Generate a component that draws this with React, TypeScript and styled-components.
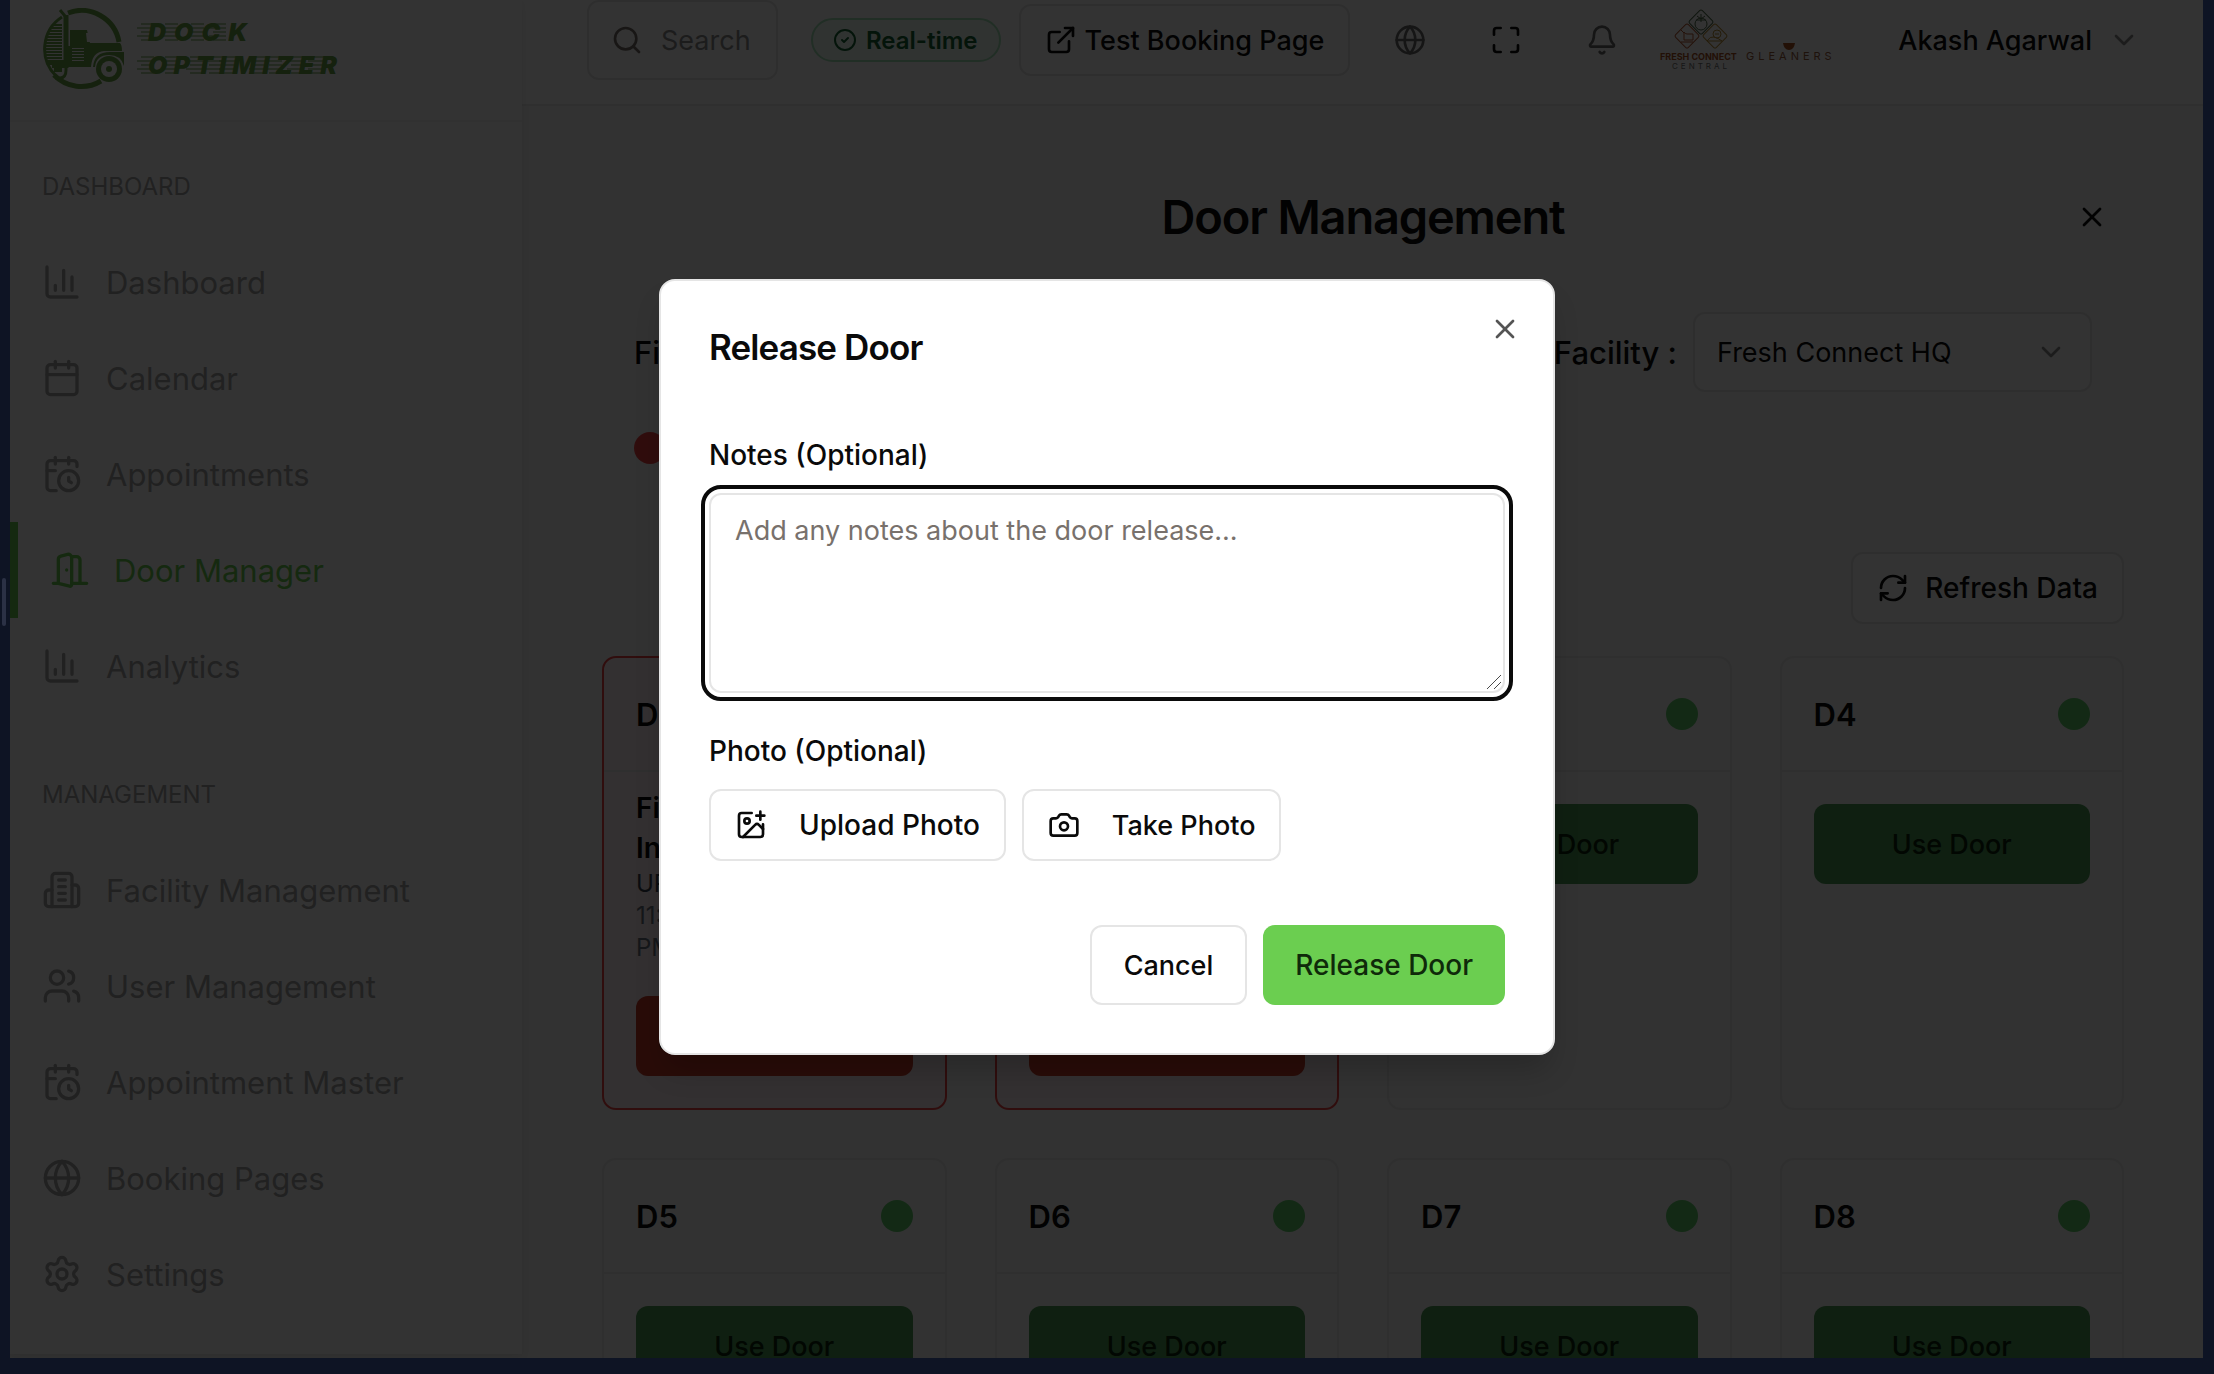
import React from "react";
import styled, { createGlobalStyle } from "styled-components";
import {
  Bell,
  Calendar,
  CalendarClock,
  Camera,
  ChevronDown,
  CircleCheck,
  ExternalLink,
  Globe,
  ImagePlus,
  LogOut,
  Maximize,
  RefreshCw,
  Search,
  Settings,
  Users,
  X,
} from "lucide-react";

const color = {
  frame: "#0e1424",
  ink: "#0a0a0a",
  muted: "#78716c",
  nav: "#a6a6a6",
  line: "#e5e5e5",
  page: "#f7f7f7",
  brand: "#6bce50",
  logo: "#6ba549",
  free: "#5fcd6a",
  use: "#4b9b55",
  busy: "#ef4444",
  release: "#cc3c2c",
};

const GlobalStyle = createGlobalStyle`
  *, *::before, *::after { box-sizing: border-box; }
  body {
    margin: 0;
    font-family: Inter, "Liberation Sans", sans-serif;
    font-size: 27px;
    color: ${color.ink};
  }
  button, input, select, textarea { font: inherit; color: inherit; margin: 0; }
  h1, h2, h3, p, ul { margin: 0; padding: 0; }
  svg { flex: none; display: block; }
`;

const Frame = styled.div`
  position: relative;
  height: 100vh;
  padding: 0 11px 16px 10px;
  background: ${color.frame};
`;

const DragHandle = styled.span`
  position: absolute;
  left: 2px;
  top: 578px;
  width: 4px;
  height: 48px;
  border-radius: 2px;
  background: #2b3145;
`;

const Screen = styled.div`
  position: relative;
  display: flex;
  height: 100%;
  overflow: hidden;
  background: ${color.page};
`;

/* ---------- sidebar ---------- */

const Sidebar = styled.aside`
  flex: none;
  width: 512px;
  margin-bottom: 4px;
  background: #fff;
  box-shadow: 0 2px 8px rgba(0, 0, 0, 0.08);
  z-index: 1;
`;

const Brand = styled.div`
  height: 122px;
  padding: 8px 32px 0;
  border-bottom: 2px solid #f3f3f3;
`;

const NavGroup = styled.nav<{ $first?: boolean }>`
  padding-top: ${(p) => (p.$first ? 45 : 61)}px;
`;

const NavHeading = styled.h3`
  padding: 0 32px;
  margin-bottom: 27px;
  font-size: 24px;
  line-height: 40px;
  font-weight: 400;
  text-transform: uppercase;
  color: ${color.nav};
`;

const NavLink = styled.a<{ $active?: boolean }>`
  display: flex;
  align-items: center;
  gap: 24px;
  height: 96px;
  padding: 0 32px;
  font-size: 31px;
  text-decoration: none;
  color: ${(p) => (p.$active ? color.brand : color.nav)};
  border-left: ${(p) => (p.$active ? `8px solid ${color.brand}` : "0")};
`;

/* ---------- top bar ---------- */

const Main = styled.main`
  flex: 1;
  min-width: 0;
  overflow: hidden;
`;

const TopBar = styled.header`
  display: flex;
  align-items: center;
  height: 106px;
  padding: 0 63px 24px 65px;
  background: #fff;
  border-bottom: 2px solid #ebebeb;
`;

const SearchBox = styled.label`
  display: flex;
  align-items: center;
  gap: 18px;
  width: 191px;
  height: 80px;
  margin-right: 33px;
  padding: 0 22px;
  border: 2px solid ${color.line};
  border-radius: 12px;
  color: ${color.muted};
`;

const SearchInput = styled.input`
  width: 100%;
  min-width: 0;
  padding: 0;
  border: 0;
  outline: 0;
  background: none;
  &::placeholder {
    color: #8e8e8e;
    opacity: 1;
  }
`;

const StatusPill = styled.span`
  display: flex;
  align-items: center;
  gap: 9px;
  height: 44px;
  margin-right: 18px;
  padding: 0 21px 0 20px;
  border: 2px solid #a4e3b9;
  border-radius: 22px;
  background: #f0fdf4;
  color: #166534;
  font-size: 24px;
  font-weight: 600;
`;

const OutlineButton = styled.button<{ $gap?: number; $tall?: boolean; $size?: number }>`
  display: inline-flex;
  align-items: center;
  justify-content: center;
  gap: ${(p) => p.$gap ?? 8}px;
  height: ${(p) => (p.$tall ? 80 : 72)}px;
  padding: 0 ${(p) => (p.$tall ? 32 : 24)}px;
  border: 2px solid ${color.line};
  border-radius: 12px;
  background: #fff;
  font-size: ${(p) => p.$size ?? 28}px;
  font-weight: 500;
  white-space: nowrap;
`;

const IconRow = styled.div`
  display: flex;
  align-items: center;
  gap: 64px;
  margin: 0 40px 0 44px;
`;

const IconButton = styled.button<{ $tone?: string }>`
  padding: 0;
  border: 0;
  background: none;
  color: ${(p) => p.$tone ?? "#6b6b6b"};
`;

const UserButton = styled.button`
  display: flex;
  align-items: center;
  gap: 16px;
  margin-left: auto;
  padding: 0;
  border: 0;
  background: none;
  font-weight: 500;
  white-space: nowrap;
`;

/* ---------- door board ---------- */

const Board = styled.section`
  padding: 79px 79px 0 80px;
`;

const TitleRow = styled.div`
  display: grid;
  grid-template-columns: 1fr auto 1fr;
  align-items: center;
  height: 64px;
  padding: 0 16px;
  ${IconButton} {
    justify-self: end;
  }
`;

const BoardTitle = styled.h1`
  grid-column: 2;
  font-size: 47px;
  line-height: 64px;
  font-weight: 600;
  letter-spacing: -0.025em;
`;

const FilterRow = styled.div`
  display: flex;
  align-items: center;
  justify-content: space-between;
  margin-top: 63px;
  padding: 0 32px;
  font-size: 31px;
  font-weight: 500;
`;

const Field = styled.label`
  display: flex;
  align-items: center;
  gap: 16px;
`;

const SelectWrap = styled.span`
  display: grid;
  width: 399px;
  align-items: center;
  > * {
    grid-area: 1 / 1;
  }
  > svg {
    justify-self: end;
    margin-right: 25px;
    color: #8a8a8a;
    pointer-events: none;
  }
`;

const Select = styled.select`
  width: 100%;
  height: 80px;
  padding: 0 22px;
  border: 2px solid ${color.line};
  border-radius: 12px;
  appearance: none;
  background: #fff;
  font-size: 27px;
  font-weight: 400;
`;

const Legend = styled.div`
  display: flex;
  align-items: center;
  gap: 16px;
  height: 32px;
  margin-top: 40px;
  padding: 0 32px;
`;

const Dot = styled.span<{ $busy?: boolean }>`
  width: 32px;
  height: 32px;
  border-radius: 50%;
  background: ${(p) => (p.$busy ? color.busy : color.free)};
`;

const Actions = styled.div`
  display: flex;
  justify-content: flex-end;
  margin: 88px 0 32px;
`;

const DoorGrid = styled.div`
  display: grid;
  grid-template-columns: repeat(4, 1fr);
  gap: 48px;
`;

const DoorCard = styled.article<{ $busy?: boolean }>`
  border: 2px solid ${(p) => (p.$busy ? color.busy : "#eaeaea")};
  border-radius: 14px;
  background: ${(p) => (p.$busy ? "#fff1f2" : "transparent")};
`;

const DoorHeader = styled.div`
  display: flex;
  align-items: center;
  justify-content: space-between;
  height: 114px;
  padding: 0 32px;
  border-bottom: 2px solid #eaeaea;
`;

const DoorName = styled.h2`
  font-size: 31px;
  font-weight: 600;
`;

const DoorBody = styled.div<{ $busy?: boolean }>`
  padding: ${(p) => (p.$busy ? 16 : 32)}px 32px 32px;
`;

const DoorButton = styled.button<{ $busy?: boolean }>`
  display: flex;
  align-items: center;
  justify-content: center;
  gap: 32px;
  width: 100%;
  height: 80px;
  border: 0;
  border-radius: 12px;
  background: ${(p) => (p.$busy ? color.release : color.use)};
  font-weight: 500;
  color: ${(p) => (p.$busy ? color.ink : "#0a230a")};
  white-space: nowrap;
`;

const Visit = styled.div`
  margin-bottom: 32px;
  font-size: 24px;
  line-height: 32px;
  color: #6b7280;
`;

const Company = styled.p`
  font-size: 28px;
  line-height: 40px;
  font-weight: 600;
  color: ${color.ink};
`;

const Carrier = styled.p`
  color: #374151;
`;

/* ---------- dialog ---------- */

const Overlay = styled.div`
  position: absolute;
  inset: 0;
  z-index: 2;
  background: rgba(0, 0, 0, 0.8);
`;

const DialogLayer = styled.div`
  position: absolute;
  inset: 0;
  z-index: 3;
  display: grid;
  place-items: center;
  padding-bottom: 40px;
`;

const Dialog = styled.form`
  position: relative;
  width: 896px;
  padding: 48px;
  border: 2px solid ${color.line};
  border-radius: 16px;
  background: #fff;
  box-shadow: 0 20px 30px -6px rgba(0, 0, 0, 0.2);
`;

const DialogTitle = styled.h2`
  margin-bottom: 76px;
  font-size: 35px;
  line-height: 36px;
  font-weight: 600;
  letter-spacing: -0.025em;
`;

const CloseButton = styled(IconButton)`
  position: absolute;
  top: 32px;
  right: 32px;
`;

const Label = styled.label`
  display: block;
  margin-bottom: 24px;
  font-size: 28px;
  line-height: 28px;
  font-weight: 500;
`;

const NotesField = styled.div`
  display: grid;
  margin-bottom: 44px;
  > * {
    grid-area: 1 / 1;
  }
  > svg {
    place-self: end;
    margin: 3px;
    pointer-events: none;
  }
`;

const Notes = styled.textarea`
  display: block;
  width: 100%;
  height: 200px;
  padding: 16px 24px;
  border: 2px solid ${color.line};
  border-radius: 12px;
  outline: 4px solid ${color.ink};
  outline-offset: 4px;
  line-height: 40px;
  resize: vertical;
  &::-webkit-resizer {
    background: transparent;
  }
  &::placeholder {
    color: ${color.muted};
    opacity: 1;
  }
`;

const ButtonRow = styled.div<{ $end?: boolean }>`
  display: flex;
  gap: 16px;
  justify-content: ${(p) => (p.$end ? "flex-end" : "flex-start")};
  margin-top: ${(p) => (p.$end ? 64 : 0)}px;
`;

const PrimaryButton = styled.button`
  height: 80px;
  padding: 0 32px;
  border: 0;
  border-radius: 12px;
  background: ${color.brand};
  color: #0f2a0a;
  font-size: 28px;
  font-weight: 500;
`;

/* ---------- drawings ---------- */

const ChartIcon = () => (
  <svg width="40" height="40" viewBox="0 0 24 24" fill="none" stroke="currentColor" strokeWidth="2" strokeLinecap="round" strokeLinejoin="round">
    <path d="M3 3v16a2 2 0 0 0 2 2h16" />
    <path d="M8 17v-3M13 17V5M18 17V9" />
  </svg>
);

const DoorIcon = () => (
  <svg width="40" height="40" viewBox="0 0 24 24" fill="none" stroke="currentColor" strokeWidth="2" strokeLinecap="round" strokeLinejoin="round">
    <path d="M2 20h3M13 20h9M10 12v.01" />
    <path d="M13 4h3a2 2 0 0 1 2 2v14" />
    <path d="M13 4.562v16.157a1 1 0 0 1-1.242.97L5 20V5.562a2 2 0 0 1 1.515-1.94l4-1A2 2 0 0 1 13 4.561Z" />
  </svg>
);

const BuildingIcon = () => (
  <svg width="40" height="40" viewBox="0 0 24 24" fill="none" stroke="currentColor" strokeWidth="2" strokeLinecap="round" strokeLinejoin="round">
    <path d="M6 22V4a2 2 0 0 1 2-2h8a2 2 0 0 1 2 2v18Z" />
    <path d="M6 12H4a2 2 0 0 0-2 2v6a2 2 0 0 0 2 2h2" />
    <path d="M18 9h2a2 2 0 0 1 2 2v9a2 2 0 0 1-2 2h-2" />
    <path d="M10 6h4M10 10h4M10 14h4M10 18h4" />
  </svg>
);

const streaks = (letters: number[], top: number) =>
  letters.flatMap((x) =>
    [0, 4, 8, 12, 16].map((dy) => (
      <path key={`${x}-${dy}`} d={`M${x - 9 - (dy % 8)} ${top + dy + 1}H${x + 4}`} />
    ))
  );

const BrandLogo = () => (
  <svg width="310" height="88" viewBox="0 0 310 88" role="img" aria-label="Dock Optimizer">
    <g fill="none" stroke={color.logo}>
      <path d="M26 5A38 38 0 0 1 77 34" strokeWidth="5" />
      <path d="M20 9A38 38 0 0 0 14 68" strokeWidth="3" />
      <path d="M12 67A38 38 0 0 0 59 73" strokeWidth="5" />
      <path d="M18 2l5 6" strokeWidth="3" />
      <path d="M24 7v53" strokeWidth="5" />
      <path d="M24 58v4q0 8-6 8h-5" strokeWidth="3" />
      <path
        d="M12 17h8M9 20h11M7 23h13M6 26h14M5 29h15M4 32h16M4 35h16M4 38h16M4 41h16M4 44h16M4 47h16M5 50h15M5 53h15M6 56h14"
        strokeWidth="2"
      />
      <path d="M6 54h16M10 58h12M12 62h8" strokeWidth="4" />
    </g>
    <g fill={color.logo}>
      <path d="M28 22h17l3 13h30q2 2 2 8H62q-12 1-13 16H24V38h4z" />
      <circle cx="67" cy="61" r="13" />
      <path d="M51 59q1-15 17-15h14v14q-3-11-15-11-13 0-14 12z" />
    </g>
    <circle cx="67" cy="61" r="8" fill="#fff" />
    <circle cx="67" cy="61" r="3" fill={color.logo} />
    <path d="M44 25h2l3 9h-4zM30 38h12v15H30z" fill="#fff" />
    <path d="M30 39h12M30 42h12M30 45h12M30 48h12M30 51h12" stroke={color.logo} strokeWidth="2" />
    <g stroke={color.logo} strokeWidth="1">
      {streaks([108, 132, 158, 180], 15)}
      {streaks([108, 132, 157, 176, 190, 220, 236, 258, 279], 48)}
    </g>
    <g fill={color.logo} fontFamily="Inter" fontWeight="900" fontStyle="italic" fontSize="25">
      <text x="106" y="33" letterSpacing="8">DOCK</text>
      <text x="106" y="66" letterSpacing="6">OPTIMIZER</text>
    </g>
  </svg>
);

const PartnerLogos = () => (
  <svg width="178" height="64" viewBox="0 0 178 64" role="img" aria-label="Fresh Connect Central, Gleaners">
    <g fill="none" strokeWidth="1">
      <g stroke="#4e6a48">
        <rect x="34" y="5" width="18" height="18" rx="2" transform="rotate(45 43 14)" />
        <circle cx="43" cy="16" r="6" />
        <path d="M43 6v8M39 8l4 3 4-3M38 12h10" />
      </g>
      <g stroke="#b4582f">
        <rect x="20" y="19" width="18" height="18" rx="2" transform="rotate(45 29 28)" />
        <path d="M23 22l3 3v7h9v-6h-6q-2 0-3-2M23 34h12" />
      </g>
      <g stroke="#b78c35">
        <rect x="48" y="19" width="18" height="18" rx="2" transform="rotate(45 57 28)" />
        <circle cx="59" cy="26" r="4" />
        <path d="M49 33q3-5 7-4 4 1 8 4zM57 26h4" />
      </g>
    </g>
    <path d="M125 35h12q-1 7-6 7t-6-7z" fill="#a8501e" />
    <g fontFamily="Inter">
      <text x="2" y="52" fontSize="9" fontWeight="700" fill="#a8501e">FRESH CONNECT</text>
      <text x="14" y="61" fontSize="8" fill="#6f6f6f" letterSpacing="3">CENTRAL</text>
      <text x="88" y="52" fontSize="11" fill="#965a3a" letterSpacing="4">GLEANERS</text>
    </g>
  </svg>
);

const ResizeGrip = () => (
  <svg width="16" height="16" viewBox="0 0 16 16" fill="none" stroke="#4a4a4a" strokeWidth="1" aria-hidden="true">
    <path d="M1 15L15 1M8 15l7-7" />
  </svg>
);

/* ---------- data ---------- */

const groups = [
  {
    title: "Dashboard",
    items: [
      { label: "Dashboard", icon: <ChartIcon /> },
      { label: "Calendar", icon: <Calendar size={40} /> },
      { label: "Appointments", icon: <CalendarClock size={40} /> },
      { label: "Door Manager", icon: <DoorIcon />, active: true },
      { label: "Analytics", icon: <ChartIcon /> },
    ],
  },
  {
    title: "Management",
    items: [
      { label: "Facility Management", icon: <BuildingIcon /> },
      { label: "User Management", icon: <Users size={40} /> },
      { label: "Appointment Master", icon: <CalendarClock size={40} /> },
      { label: "Booking Pages", icon: <Globe size={40} /> },
      { label: "Settings", icon: <Settings size={40} /> },
    ],
  },
];

const visit = { company: ["Finest", "Inc."], carrier: "UPS", time: ["11:00 AM - 12:00", "PM"] };

const doors: { name: string; visit?: typeof visit }[] = [
  { name: "D1", visit },
  { name: "D2", visit },
  { name: "D3" },
  { name: "D4" },
  { name: "D5" },
  { name: "D6" },
  { name: "D7" },
  { name: "D8" },
];

export default function App() {
  return (
    <>
      <GlobalStyle />
      <Frame>
        <Screen>
          <Sidebar>
            <Brand>
              <BrandLogo />
            </Brand>
            {groups.map((group, i) => (
              <NavGroup key={group.title} $first={i === 0} aria-label={group.title}>
                <NavHeading>{group.title}</NavHeading>
                {group.items.map((item) => (
                  <NavLink key={item.label} href="#" $active={"active" in item}>
                    {item.icon}
                    {item.label}
                  </NavLink>
                ))}
              </NavGroup>
            ))}
          </Sidebar>

          <Main>
            <TopBar>
              <SearchBox>
                <Search size={32} />
                <SearchInput type="text" placeholder="Search" aria-label="Search" />
              </SearchBox>
              <StatusPill>
                <CircleCheck size={24} />
                Real-time
              </StatusPill>
              <OutlineButton type="button" $size={27}>
                <ExternalLink size={32} />
                Test Booking Page
              </OutlineButton>
              <IconRow>
                <IconButton type="button" aria-label="Language">
                  <Globe size={32} />
                </IconButton>
                <IconButton type="button" aria-label="Full screen" $tone={color.ink}>
                  <Maximize size={32} />
                </IconButton>
                <IconButton type="button" aria-label="Notifications">
                  <Bell size={32} />
                </IconButton>
              </IconRow>
              <PartnerLogos />
              <UserButton type="button">
                Akash Agarwal
                <ChevronDown size={32} color="#8a8a8a" />
              </UserButton>
            </TopBar>

            <Board>
              <TitleRow>
                <BoardTitle>Door Management</BoardTitle>
                <IconButton type="button" aria-label="Close" $tone={color.ink}>
                  <X size={32} />
                </IconButton>
              </TitleRow>
              <FilterRow>
                <span>Find</span>
                <Field>
                  Facility :
                  <SelectWrap>
                    <Select defaultValue="hq">
                      <option value="hq">Fresh Connect HQ</option>
                    </Select>
                    <ChevronDown size={32} />
                  </SelectWrap>
                </Field>
              </FilterRow>
              <Legend>
                <Dot $busy />
              </Legend>
              <Actions>
                <OutlineButton type="button" $gap={16}>
                  <RefreshCw size={32} />
                  Refresh Data
                </OutlineButton>
              </Actions>
              <DoorGrid>
                {doors.map((door) => (
                  <DoorCard key={door.name} $busy={!!door.visit}>
                    <DoorHeader>
                      <DoorName>{door.name}</DoorName>
                      <Dot $busy={!!door.visit} />
                    </DoorHeader>
                    <DoorBody $busy={!!door.visit}>
                      {door.visit && (
                        <Visit>
                          {door.visit.company.map((line) => (
                            <Company key={line}>{line}</Company>
                          ))}
                          <Carrier>{door.visit.carrier}</Carrier>
                          {door.visit.time.map((line) => (
                            <p key={line}>{line}</p>
                          ))}
                        </Visit>
                      )}
                      <DoorButton type="button" $busy={!!door.visit}>
                        {door.visit && <LogOut size={32} />}
                        {door.visit ? "Release Door" : "Use Door"}
                      </DoorButton>
                    </DoorBody>
                  </DoorCard>
                ))}
              </DoorGrid>
            </Board>
          </Main>

          <Overlay />
        </Screen>
        <DragHandle />
        <DialogLayer>
          <Dialog role="dialog" aria-labelledby="dialog-title" onSubmit={(e) => e.preventDefault()}>
            <DialogTitle id="dialog-title">Release Door</DialogTitle>
            <CloseButton type="button" aria-label="Close dialog" $tone="#545454">
              <X size={32} />
            </CloseButton>
            <Label htmlFor="notes">Notes (Optional)</Label>
            <NotesField>
              <Notes id="notes" placeholder="Add any notes about the door release..." />
              <ResizeGrip />
            </NotesField>
            <Label as="div">Photo (Optional)</Label>
            <ButtonRow>
              <OutlineButton type="button" $gap={32}>
                <ImagePlus size={32} />
                Upload Photo
              </OutlineButton>
              <OutlineButton type="button" $gap={32} $size={27}>
                <Camera size={32} />
                Take Photo
              </OutlineButton>
            </ButtonRow>
            <ButtonRow $end>
              <OutlineButton type="button" $tall $size={27}>
                Cancel
              </OutlineButton>
              <PrimaryButton type="submit">Release Door</PrimaryButton>
            </ButtonRow>
          </Dialog>
        </DialogLayer>
      </Frame>
    </>
  );
}
